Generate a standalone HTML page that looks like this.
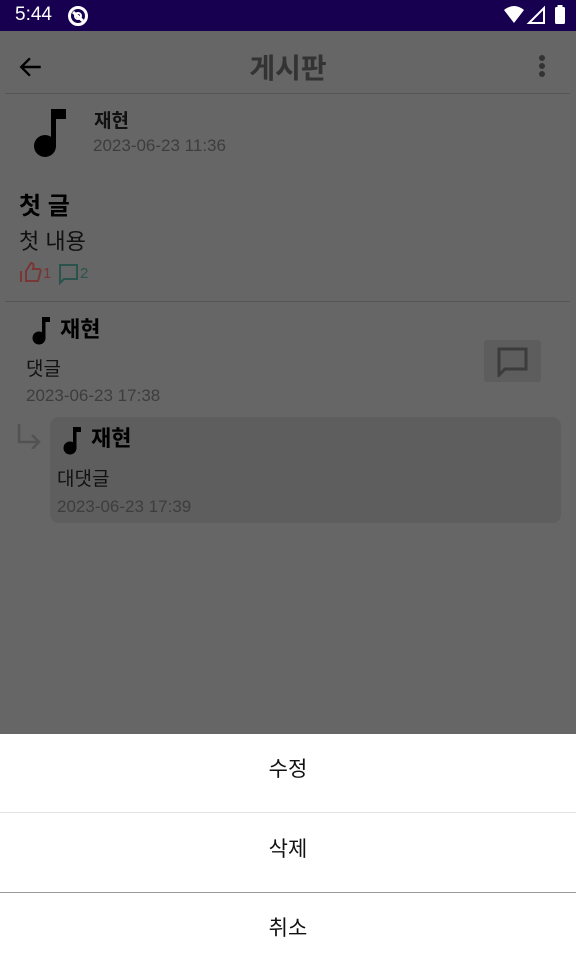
<!DOCTYPE html>
<html><head><meta charset="utf-8"><style>
*{margin:0;padding:0;box-sizing:border-box}
body{width:576px;height:960px;overflow:hidden;background:#666;font-family:"Liberation Sans","Noto Sans CJK KR",sans-serif;position:relative;color:#000}
.abs{position:absolute}
.sb{left:0;top:0;width:576px;height:31px;background:#170050;color:#fff}
.date{color:#3d3d3d;font-size:17px;font-weight:300}
.sheet{left:0;top:734px;width:576px;height:226px;background:#fff}
.opt{position:absolute;left:0;width:576px;text-align:center;font-size:21px;color:#111}
</style></head><body>
<div class="abs sb">
 <div class="abs" style="left:15px;top:4px;font-size:19px">5:44</div>
 <svg class="abs" style="left:67px;top:5px" width="22" height="22" viewBox="0 0 22 22"><circle cx="11" cy="11" r="8.5" fill="none" stroke="#fff" stroke-width="3"/><path d="M6 7l10 9" stroke="#fff" stroke-width="3"/><circle cx="11" cy="11" r="3" fill="none" stroke="#fff" stroke-width="2"/></svg>
 <svg class="abs" style="left:504px;top:5px" width="64" height="20" viewBox="0 0 64 20"><path d="M0 5Q10 -3 20 5L10 18Z" fill="#fff"/><path d="M25 18L40 3V18Z" fill="none" stroke="#fff" stroke-width="2"/><rect x="51" y="2" width="10" height="17" rx="1.5" fill="#fff"/><rect x="53.5" y="0" width="5" height="3" fill="#fff"/></svg>
</div>
<svg class="abs" style="left:18px;top:54px" width="26" height="26" viewBox="0 0 24 24"><path d="M21 12H4M11 4l-8 8 8 8" fill="none" stroke="#000" stroke-width="2.2"/></svg>
<div class="abs" style="left:0;width:576px;top:47px;text-align:center;font-size:28px;font-weight:bold;color:#333">게시판</div>
<svg class="abs" style="left:535px;top:54px" width="14" height="26"><circle cx="7" cy="4" r="3" fill="#333"/><circle cx="7" cy="12" r="3" fill="#333"/><circle cx="7" cy="20" r="3" fill="#333"/></svg>
<div class="abs" style="left:5px;top:93px;width:565px;height:1px;background:#555"></div>
<svg class="abs" style="left:33px;top:108px" width="34" height="50" viewBox="0 0 34 50"><rect x="18" y="1" width="5" height="38" fill="#000"/><rect x="18" y="1" width="15" height="10" fill="#000"/><circle cx="12" cy="38" r="11" fill="#000"/></svg>
<div class="abs" style="left:94px;top:106px;font-size:19px;font-weight:bold;color:#111">재현</div>
<div class="abs date" style="left:93px;top:136px">2023-06-23 11:36</div>
<div class="abs" style="left:19px;top:186px;font-size:24px;font-weight:bold">첫 글</div>
<div class="abs" style="left:19px;top:224px;font-size:22px;color:#111">첫 내용</div>
<svg class="abs" style="left:20px;top:262px" width="22" height="22" viewBox="0 0 22 22"><path d="M1 9v11M6 9l5-8c3 0 3 3 2 6h6c1 0 2 1 1.6 2.4L18 19H6Z" fill="none" stroke="#7a3535" stroke-width="2"/></svg>
<div class="abs" style="left:43px;top:265px;font-size:15px;color:#7a3535">1</div>
<svg class="abs" style="left:58px;top:263px" width="22" height="22" viewBox="0 0 22 22"><path d="M2 2h17v14H6l-4 4Z" fill="none" stroke="#2b524b" stroke-width="2"/></svg>
<div class="abs" style="left:80px;top:265px;font-size:15px;color:#2b524b">2</div>
<div class="abs" style="left:5px;top:301px;width:565px;height:1px;background:#555"></div>
<svg class="abs" style="left:30px;top:315px" width="22" height="30" viewBox="0 0 22 30"><rect x="12" y="2" width="3.5" height="22" fill="#000"/><rect x="12" y="2" width="8" height="5" fill="#000"/><circle cx="9" cy="23" r="6.5" fill="#000"/></svg>
<div class="abs" style="left:60px;top:312px;font-size:22px;font-weight:bold">재현</div>
<div class="abs" style="left:26px;top:354px;font-size:19px;color:#111">댓글</div>
<div class="abs date" style="left:26px;top:386px">2023-06-23 17:38</div>
<div class="abs" style="left:484px;top:340px;width:57px;height:42px;background:#5d5d5d;border-radius:3px"></div>
<svg class="abs" style="left:497px;top:347px" width="32" height="30" viewBox="0 0 32 30"><path d="M2 2h27v20H8l-6 6Z" fill="none" stroke="#3c3c3c" stroke-width="3"/></svg>
<svg class="abs" style="left:16px;top:423px" width="26" height="26" viewBox="0 0 26 26"><path d="M3 1v18h20M16 12l7 7-7 7" fill="none" stroke="#525252" stroke-width="2.5"/></svg>
<div class="abs" style="left:50px;top:417px;width:511px;height:106px;background:#5e5e5e;border-radius:9px"></div>
<svg class="abs" style="left:61px;top:425px" width="22" height="30" viewBox="0 0 22 30"><rect x="12" y="2" width="3.5" height="22" fill="#000"/><rect x="12" y="2" width="8" height="5" fill="#000"/><circle cx="9" cy="23" r="6.5" fill="#000"/></svg>
<div class="abs" style="left:91px;top:421px;font-size:22px;font-weight:bold">재현</div>
<div class="abs" style="left:57px;top:464px;font-size:19px;color:#111">대댓글</div>
<div class="abs date" style="left:57px;top:497px">2023-06-23 17:39</div>
<div class="abs sheet">
 <div class="opt" style="top:19px">수정</div>
 <div class="abs" style="left:0;top:78px;width:576px;height:1px;background:#e3e3e3"></div>
 <div class="opt" style="top:99px">삭제</div>
 <div class="abs" style="left:0;top:158px;width:576px;height:1px;background:#999"></div>
 <div class="opt" style="top:178px">취소</div>
</div>
</body></html>
